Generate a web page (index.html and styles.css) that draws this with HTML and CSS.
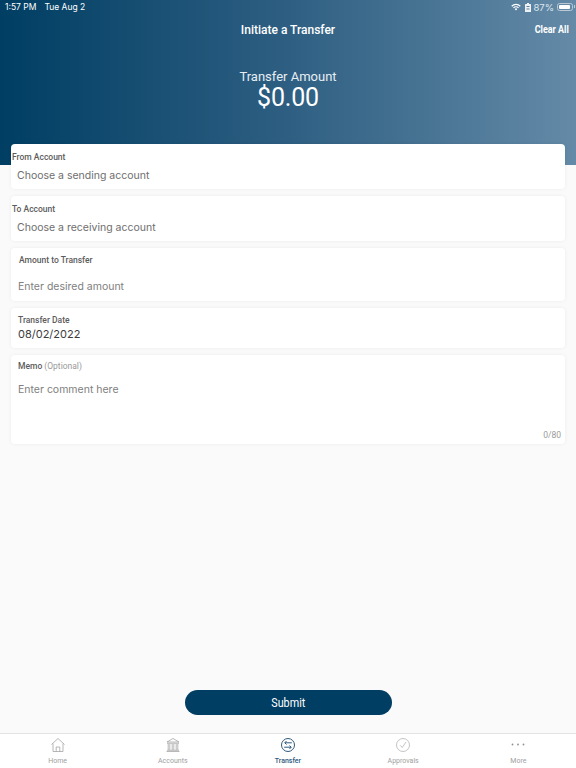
FILE: index.html
```html
<!DOCTYPE html>
<html lang="en">
<head>
  <meta charset="UTF-8">
  <meta name="viewport" content="width=device-width, initial-scale=1.0">
  <title>Initiate a Transfer</title>
  <link rel="stylesheet" href="styles.css">
</head>
<body>
<div class="app">
  <header class="hero">
    <div class="status-bar">
      <span class="status-left"><span>1:57 PM</span><span>Tue Aug 2</span></span>
      <span class="status-right">
        <svg width="10" height="8" viewBox="0 0 11 8"><path d="M0.300 2.600a7.200 7.200 0 0 1 10.400 0l-1 1a5.800 5.800 0 0 0-8.400 0z M2.200 4.500a4.500 4.500 0 0 1 6.600 0l-1 1a3.100 3.100 0 0 0-4.600 0z M4 6.300a2 2 0 0 1 3 0l-1.500 1.600z" fill="#fff"/></svg>
        <svg class="status-lock" width="6" height="9" viewBox="0 0 6 9"><path d="M2 0h2v1h1.500a.5.500 0 0 1 .5.500v7a.5.500 0 0 1-.5.500h-5a.5.500 0 0 1-.5-.500v-7a.5.500 0 0 1 .5-.500H2z" fill="#eef2f5"/><rect x="1.500" y="3" width="3" height="1" fill="#5a7f9c"/><rect x="1.500" y="5.500" width="3" height="1" fill="#5a7f9c"/></svg>
        <span class="status-pct">87%</span>
        <span class="battery"><span class="battery-fill"></span></span>
      </span>
    </div>
    <div class="title-row">
      <h1 class="page-title">Initiate a Transfer</h1>
      <span class="clear-all">Clear All</span>
    </div>
    <div class="amount-label">Transfer Amount</div>
    <div class="amount-value">$0.00</div>
  </header>

  <main class="form">
    <section class="card card-account">
      <div class="label label-flush">From Account</div>
      <div class="value placeholder-dark">Choose a sending account</div>
    </section>
    <section class="card card-account">
      <div class="label label-flush">To Account</div>
      <div class="value placeholder-dark">Choose a receiving account</div>
    </section>
    <section class="card card-amount">
      <div class="label">Amount to Transfer</div>
      <div class="value placeholder">Enter desired amount</div>
    </section>
    <section class="card card-date">
      <div class="label">Transfer Date</div>
      <div class="value date-value">08/02/2022</div>
    </section>
    <section class="card card-memo">
      <div class="label">Memo <span class="optional">(Optional)</span></div>
      <div class="value placeholder">Enter comment here</div>
      <div class="counter">0/80</div>
    </section>
  </main>

  <div class="submit-row">
    <button class="submit-btn"><span class="submit-text">Submit</span></button>
  </div>

  <nav class="tabbar">
    <div class="tab">
      <svg class="tab-icon" viewBox="0 0 16 16" width="16" height="16" fill="none" stroke="#999" stroke-width="0.7"><path d="M1.500 7.500 8 1.500l6.500 6"/><path d="M3 6.500V14.500h10V6.500"/><path d="M6.200 14.500V10h3.600v4.500"/></svg>
      <span>Home</span>
    </div>
    <div class="tab">
      <svg class="tab-icon" viewBox="0 0 16 16" width="16" height="16" fill="none" stroke="#999" stroke-width="0.7"><path d="M2 5 8 1.500 14 5z"/><path d="M2 6.300h12M1.500 14.500h13M2 13.300h12"/><path d="M3.200 7v6M4.800 7v6M7.200 7v6M8.800 7v6M11.200 7v6M12.800 7v6"/></svg>
      <span>Accounts</span>
    </div>
    <div class="tab tab-active">
      <svg class="tab-icon" viewBox="0 0 16 16" width="16" height="16" fill="none" stroke="#2f5a7c" stroke-width="1"><circle cx="8" cy="8" r="6.500"/><path d="M11.800 5.800H4.800M6.500 4 4.800 5.800l1.700 1.700"/><path d="M4.200 10.200H11.200M9.500 8.500l1.700 1.700-1.700 1.800"/></svg>
      <span>Transfer</span>
    </div>
    <div class="tab">
      <svg class="tab-icon" viewBox="0 0 16 16" width="16" height="16" fill="none" stroke="#aaa" stroke-width="0.7"><circle cx="8" cy="8" r="6.500"/><path d="M5.200 8.300 7.200 10.500 11 5"/></svg>
      <span>Approvals</span>
    </div>
    <div class="tab">
      <svg class="tab-icon" viewBox="0 0 16 16" width="16" height="16" fill="#909090"><circle cx="2.500" cy="7.500" r=".9"/><circle cx="8" cy="7.500" r=".9"/><circle cx="13.500" cy="7.500" r=".9"/></svg>
      <span>More</span>
    </div>
  </nav>
</div>
</body>
</html>
```

FILE: styles.css
```css
* { box-sizing: border-box; }
html, body { margin: 0; padding: 0; }
body {
  font-family: Roboto, "Liberation Sans", sans-serif;
  background: #fafafa;
}
.app {
  width: 576px;
  height: 768px;
  display: flex;
  flex-direction: column;
  position: relative;
  overflow: hidden;
}

/* header */
.hero {
  height: 165px;
  margin-bottom: -21px;
  color: #fff;
  background: linear-gradient(90deg, #003e63 0%, #2e5f82 50%, #648aa7 100%);
}
.status-bar {
  height: 14px;
  padding: 0 3px 0 5px;
  display: flex;
  justify-content: space-between;
  align-items: center;
  font-family: Inter, sans-serif;
  font-size: 8.500px;
}
.status-left { display: flex; gap: 8px; }
.status-right {
  display: flex;
  align-items: center;
  gap: 3px;
  color: #dfe7ee;
}
.status-lock { margin-left: 1px; }
.status-pct { font-size: 9.500px; margin-left: -1px; }
.battery {
  width: 16px;
  height: 8px;
  padding: 1px;
  border: 1px solid #b9c9d6;
  border-radius: 2.500px;
  position: relative;
}
.battery::after {
  content: "";
  position: absolute;
  right: -3px;
  top: 1px;
  width: 1px;
  height: 3px;
  background: #b9c9d6;
}
.battery-fill {
  display: block;
  width: 90%;
  height: 100%;
  background: #fff;
  border-radius: 1px;
}
.title-row {
  height: 32px;
  display: flex;
  justify-content: center;
  align-items: center;
  position: relative;
}
.page-title {
  margin: 0;
  font-size: 12px;
  font-weight: 500;
}
.clear-all {
  position: absolute;
  right: 7px;
  top: 8px;
  font-size: 11.500px;
  font-weight: 700;
  transform: scaleX(0.78);
  transform-origin: right center;
}
.amount-label {
  margin-top: 23px;
  text-align: center;
  font-size: 13px;
  line-height: 16px;
  color: #e8eef3;
}
.amount-value {
  margin-top: -1px;
  text-align: center;
  font-size: 25px;
  line-height: 27px;
  letter-spacing: -0.2px;
}

/* form cards */
.form {
  padding: 0 11px;
  display: flex;
  flex-direction: column;
  gap: 7px;
  position: relative;
}
.card {
  background: #fff;
  border-radius: 4px;
  box-shadow: 0 0 4px rgba(0, 0, 0, 0.06);
  position: relative;
}
.card-account { height: 45px; padding: 7px 6px 0 6px; }
.card-amount { height: 53px; padding: 7px 7px 0 7px; }
.card-date { height: 40px; padding: 7px 7px 0 7px; }
.card-memo { height: 89px; padding: 6px 7px 0 7px; }
.label {
  font-size: 8.500px;
  line-height: 11px;
  font-weight: 500;
  color: #5c5c5c;
}
.label-flush { margin-left: -5px; margin-top: 1px; }
.card-amount .label { margin-left: 1px; }
.optional { color: #9a9a9a; font-weight: 400; }
.value {
  font-family: Inter, sans-serif;
  font-size: 10.500px;
  line-height: 14px;
}
.placeholder-dark { margin-top: 6px; color: #6e6e6e; }
.placeholder { color: #808080; }
.card-amount .placeholder { margin-top: 14px; }
.card-memo .placeholder { margin-top: 11px; }
.date-value { margin-top: 1px; color: #3c3c3c; font-size: 11px; }
.counter {
  position: absolute;
  right: 4px;
  bottom: 4px;
  font-size: 8.500px;
  color: #9a9a9a;
}

/* submit */
.submit-row {
  margin-top: auto;
  display: flex;
  justify-content: center;
  padding-bottom: 18px;
}
.submit-btn {
  width: 207px;
  height: 25px;
  padding: 0 0 1px;
  border: 0;
  border-radius: 13px;
  background: #003e63;
  color: #fff;
  font-family: Roboto, sans-serif;
  font-size: 13.500px;
  font-weight: 400;
}
.submit-text { display: inline-block; transform: scaleX(0.8); }

/* tab bar */
.tabbar {
  height: 35px;
  display: flex;
  justify-content: space-around;
  background: #fff;
  border-top: 1px solid #e4e4e4;
}
.tab {
  width: 115px;
  display: flex;
  flex-direction: column;
  align-items: center;
  padding-top: 3px;
  font-size: 7px;
  color: #a0a0a0;
}
.tab-icon { display: block; margin-bottom: 4px; }
.tab-active { color: #2f5a7c; font-weight: 500; }
```
